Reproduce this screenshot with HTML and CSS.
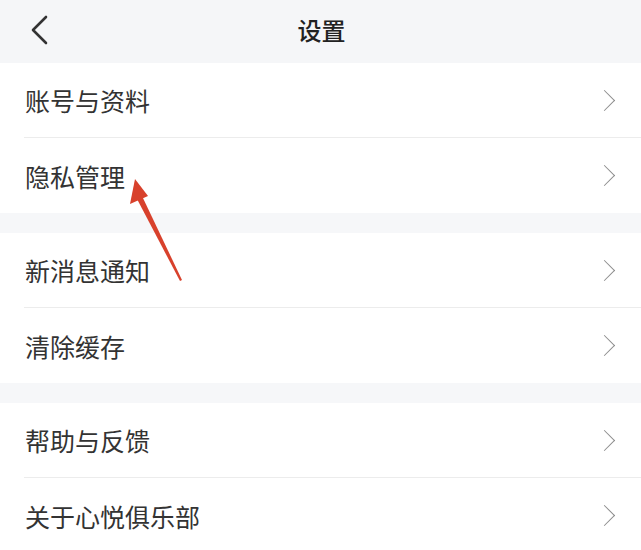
FILE: index.html
```html
<!DOCTYPE html>
<html lang="zh-CN">
<head>
  <meta charset="UTF-8">
  <meta name="viewport" content="width=device-width, initial-scale=1.0">
  <title>设置</title>
  <link rel="stylesheet" href="styles.css">
</head>
<body>

  <!-- Header -->
  <header class="top-bar">
    <span class="back-btn">
      <svg width="20" height="32" viewBox="0 0 20 32">
        <polyline points="16,3 3,16 16,29" fill="none" stroke="#333" stroke-width="2.6" stroke-linecap="round" stroke-linejoin="round"/>
      </svg>
    </span>
    <h1 class="title">设置</h1>
  </header>

  <div class="settings">
    <div class="group">
      <div class="item"><span>账号与资料</span><i class="arrow-right"></i></div>
      <div class="item"><span>隐私管理</span><i class="arrow-right"></i></div>
    </div>

    <div class="group">
      <div class="item"><span>新消息通知</span><i class="arrow-right"></i></div>
      <div class="item"><span>清除缓存</span><i class="arrow-right"></i></div>
    </div>

    <div class="group">
      <div class="item"><span>帮助与反馈</span><i class="arrow-right"></i></div>
      <div class="item"><span>关于心悦俱乐部</span><i class="arrow-right"></i></div>
    </div>
  </div>

  <!-- red pointer drawn over the list -->
  <svg class="pointer" width="641" height="550" viewBox="0 0 641 550">
    <polygon points="182,280 142,196 137,199 180,281" fill="#d8412c"/>
    <polygon points="135,179 148,196 130,204" fill="#d8412c"/>
  </svg>

</body>
</html>
```

FILE: styles.css
```css
body {
  font-family: "Noto Sans CJK SC", "Noto Sans", sans-serif;
  margin: 0;
  padding: 0;
  background-color: #f6f7f9;
  color: #333;
  width: 641px;
  height: 550px;
  overflow: hidden;
  position: relative;
}

.top-bar {
  height: 63px;
  box-sizing: border-box;
  padding-bottom: 5px;
  background-color: #f5f6f8;
  display: flex;
  align-items: center;
  justify-content: center;
  position: relative;
}

.back-btn {
  position: absolute;
  left: 30px;
  top: 14px;
  line-height: 0;
}

.title {
  margin: 0;
  font-size: 24px;
  font-weight: 500;
  color: #222;
  padding-left: 2px;
}

.group {
  background-color: white;
  margin-bottom: 20px;
}

.item {
  height: 74px;
  display: flex;
  align-items: center;
  justify-content: space-between;
  margin-left: 24px;
  padding-right: 29px;
  border-bottom: 1px solid #ececec;
  font-size: 25px;
  color: #333;
}

.item:last-child {
  border-bottom: none;
  height: 75px;
}

.item span {
  padding-left: 1px;
}

.arrow-right {
  display: block;
  width: 14px;
  height: 14px;
  border-top: 1.8px solid #8c8c8c;
  border-right: 1.8px solid #8c8c8c;
  transform: rotate(45deg);
}

.pointer {
  position: absolute;
  left: 0;
  top: 0;
  pointer-events: none;
}
```
